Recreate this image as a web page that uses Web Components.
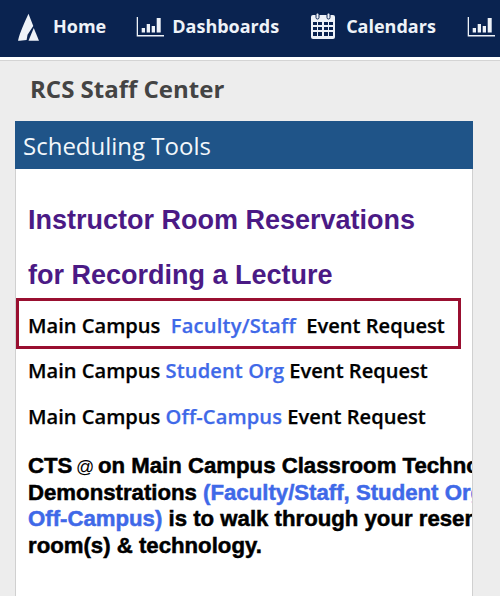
<!DOCTYPE html>
<html>
<head>
<meta charset="utf-8">
<title>RCS Staff Center</title>
<style>
  html, body { margin: 0; height: 100%; overflow: hidden; }
  body { background: #ededed; font-family: "Open Sans", sans-serif; }
</style>
</head>
<body>

<template id="nav-link-tpl">
  <style>
    :host { display: flex; align-items: center; flex: none; color: #eef2f8; font-size: 18px; font-weight: 700; line-height: 24px; }
    .icon { display: flex; align-items: center; }
  </style>
  <span class="icon"><slot name="icon"></slot></span>
  <slot></slot>
</template>

<template id="top-nav-tpl">
  <style>
    :host { display: block; }
    nav { display: flex; align-items: center; box-sizing: border-box; height: 57px; padding: 0 0 5px 18px; gap: 31px; background: #0a2350; overflow: hidden; }
    .rule { height: 3px; background: #fff; }
    .line { height: 1px; background: #d4d4d4; }
  </style>
  <nav><slot></slot></nav>
  <div class="rule"></div>
  <div class="line"></div>
</template>

<template id="tool-panel-tpl">
  <style>
    :host { display: block; margin: 0 27px 0 15px; }
    header { height: 48px; padding-left: 8px; background: #1f5488; color: #f2f7fb; font-size: 24px; line-height: 50px; }
    .body { box-sizing: border-box; height: 427px; padding: 24px 0 0 12px; background: #fff; border: 1px solid #d0d0d0; border-width: 0 1px; overflow: hidden; }
  </style>
  <header><slot name="title"></slot></header>
  <div class="body"><slot></slot></div>
</template>

<template id="request-row-tpl">
  <style>
    :host { display: block; height: 46px; color: #000; font-size: 20.1px; font-weight: 600; line-height: 44px; white-space: nowrap; -webkit-text-stroke: .25px currentColor; }
    :host([boxed]) { box-sizing: border-box; width: 445px; height: 51px; margin: 0 0 0 -12px; padding-left: 9px; border: 3px solid #990f30; line-height: 49px; }
    ::slotted(a) { color: #3f69e8; text-decoration: none; letter-spacing: .1px; }
    :host([boxed]) ::slotted(a) { letter-spacing: .2px; }
  </style>
  <slot></slot>
</template>

<script>
  class TplElement extends HTMLElement {
    constructor() {
      super()
      const tpl = document.getElementById(this.constructor.tpl)
      this.attachShadow({ mode: 'open' }).appendChild(tpl.content.cloneNode(true))
    }
  }

  class NavLink extends TplElement { static tpl = 'nav-link-tpl' }
  class TopNav extends TplElement { static tpl = 'top-nav-tpl' }
  class ToolPanel extends TplElement { static tpl = 'tool-panel-tpl' }
  class RequestRow extends TplElement { static tpl = 'request-row-tpl' }

  // shared svg so the bar chart icon is only written once
  class BarIcon extends HTMLElement {
    constructor() {
      super()
      this.attachShadow({ mode: 'open' }).innerHTML = `
        <style>:host { display: block; width: 28px; height: 21px; margin: 1px 8px 0 0; }</style>
        <svg width="28" height="21" viewBox="0 0 28 21" fill="#eef2f8">
          <path d="M.7 1H2v18h26v1.400H.7z"/>
          <rect x="5.700" y="12" width="3.300" height="4.500"/>
          <rect x="10.700" y="8" width="3.300" height="8.500"/>
          <rect x="15.700" y="10" width="3.300" height="6.500"/>
          <rect x="20.700" y="2" width="4" height="14.500"/>
        </svg>`
    }
  }

  customElements.define('nav-link', NavLink)
  customElements.define('top-nav', TopNav)
  customElements.define('tool-panel', ToolPanel)
  customElements.define('request-row', RequestRow)
  customElements.define('bar-icon', BarIcon)
</script>

<top-nav>
  <nav-link style="margin-right:-1px">
    <svg slot="icon" width="21" height="29" viewBox="0 0 22 29" style="margin:2px 14px 0 0">
      <path fill="#eef2f8" d="M11 0l5 13-6 9-1 5.500C6 27.800 2.500 28 0 28.500 2 19 7 9 11 0z"/>
      <path fill="#eef2f8" d="M16.500 15L22 28.500H11z"/>
    </svg>
    Home
  </nav-link>
  <nav-link style="margin-right:1px">
    <bar-icon slot="icon"></bar-icon>
    Dashboards
  </nav-link>
  <nav-link style="margin-right:-1px">
    <svg slot="icon" width="24" height="26" viewBox="0 0 24 26" style="margin-right:11px">
      <rect y="2" width="24" height="24" rx="2" fill="#eef2f8"/>
      <rect x="5" y="0" width="3" height="6" rx="1.500" fill="#eef2f8" stroke="#0a2350"/>
      <rect x="16" y="0" width="3" height="6" rx="1.500" fill="#eef2f8" stroke="#0a2350"/>
      <g fill="#0a2350">
        <rect x="2" y="9" width="4" height="3"/><rect x="7" y="9" width="4" height="3"/><rect x="13" y="9" width="4" height="3"/><rect x="18" y="9" width="4" height="3"/>
        <rect x="2" y="14" width="4" height="3"/><rect x="7" y="14" width="4" height="3"/><rect x="13" y="14" width="4" height="3"/><rect x="18" y="14" width="4" height="3"/>
        <rect x="2" y="19" width="4" height="4"/><rect x="7" y="19" width="4" height="4"/><rect x="13" y="19" width="4" height="4"/><rect x="18" y="19" width="4" height="4"/>
      </g>
    </svg>
    Calendars
  </nav-link>
  <nav-link style="margin-left:1px">
    <bar-icon slot="icon"></bar-icon>
  </nav-link>
</top-nav>

<div style="padding:12px 0 16px 30px;color:#444;font-size:24px;font-weight:700;line-height:32px">RCS Staff Center</div>

<tool-panel>
  <span slot="title">Scheduling Tools</span>
  <div style="font:bold 27px/55px 'Liberation Sans',sans-serif;color:#4b1a85;white-space:nowrap;height:105px">
    Instructor Room Reservations<br>for Recording a Lecture
  </div>
  <request-row boxed>Main Campus&nbsp; <a href="#">Faculty/Staff</a>&nbsp; Event Request</request-row>
  <request-row>Main Campus <a href="#">Student Org</a> Event Request</request-row>
  <request-row>Main Campus <a href="#">Off-Campus</a> Event Request</request-row>
  <div style="font:bold 22.2px/26.500px 'Liberation Sans',sans-serif;-webkit-text-stroke:.5px #000;color:#000;white-space:nowrap;margin-top:12px">
    <span style="word-spacing:-2.500px">CTS <span style="font-size:18px;line-height:0;font-weight:400;-webkit-text-stroke:0">@</span> on</span> Main Campus Classroom Technology<br>
    Demonstrations <span style="color:#3f69e8;-webkit-text-stroke-color:#3f69e8">(Faculty/Staff, Student Org,<br>Off-Campus)</span> is to walk through your reservation<br>
    room(s) &amp; technology.
  </div>
</tool-panel>

</body>
</html>
